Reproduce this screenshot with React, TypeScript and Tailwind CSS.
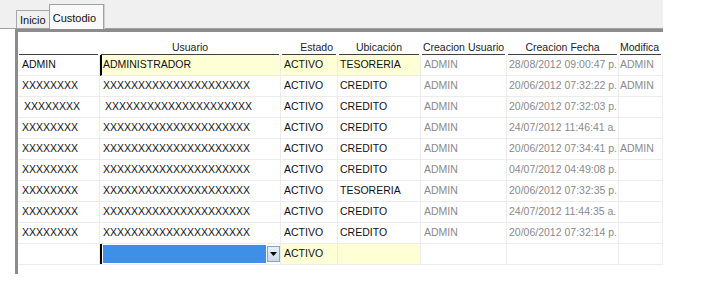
import React from "react";

type Row = {
  login: string;
  user: string;
  estado: string;
  ubic: string;
  cu: string;
  cf: string;
  mod: string;
  indent?: boolean;
};

const X8 = "XXXXXXXX";
const X20 = "XXXXXXXXXXXXXXXXXXXXX";

const rows: Row[] = [
  { login: "ADMIN", user: "ADMINISTRADOR", estado: "ACTIVO", ubic: "TESORERIA", cu: "ADMIN", cf: "28/08/2012 09:00:47 p.", mod: "ADMIN" },
  { login: X8, user: X20, estado: "ACTIVO", ubic: "CREDITO", cu: "ADMIN", cf: "20/06/2012 07:32:22 p.", mod: "ADMIN" },
  { login: X8, user: X20, estado: "ACTIVO", ubic: "CREDITO", cu: "ADMIN", cf: "20/06/2012 07:32:03 p.", mod: "", indent: true },
  { login: X8, user: X20, estado: "ACTIVO", ubic: "CREDITO", cu: "ADMIN", cf: "24/07/2012 11:46:41 a.", mod: "" },
  { login: X8, user: X20, estado: "ACTIVO", ubic: "CREDITO", cu: "ADMIN", cf: "20/06/2012 07:34:41 p.", mod: "ADMIN" },
  { login: X8, user: X20, estado: "ACTIVO", ubic: "CREDITO", cu: "ADMIN", cf: "04/07/2012 04:49:08 p.", mod: "" },
  { login: X8, user: X20, estado: "ACTIVO", ubic: "TESORERIA", cu: "ADMIN", cf: "20/06/2012 07:32:35 p.", mod: "" },
  { login: X8, user: X20, estado: "ACTIVO", ubic: "CREDITO", cu: "ADMIN", cf: "24/07/2012 11:44:35 a.", mod: "" },
  { login: X8, user: X20, estado: "ACTIVO", ubic: "CREDITO", cu: "ADMIN", cf: "20/06/2012 07:32:14 p.", mod: "" },
];

const gridCols = "grid grid-cols-[82px_181px_57px_83px_86px_112px_44px]";

function Cell({ children, className = "" }: { children?: React.ReactNode; className?: string }) {
  return (
    <div className={`h-[21px] border-b border-r border-[#ececec] flex items-center overflow-hidden whitespace-nowrap ${className}`}>
      {children}
    </div>
  );
}

export default function App() {
  return (
    <div
      className="w-[710px] h-[286px] bg-white overflow-hidden text-[10.5px] text-[#111]"
      style={{ fontFamily: "'Liberation Sans', Arial, sans-serif" }}
    >
      {/* tab strip */}
      <div className="w-[663px] h-[29px] bg-[#f0f0f0] flex items-end pl-[16px] border-b border-[#a0a0a0]">
        <div className="h-[18px] px-[3px] border-l border-t border-[#a8a8a8] flex items-center pt-[1px] text-[#111] text-[11px]">Inicio</div>
        <div className="h-[25px] w-[55px] px-[3px] bg-[#f9f9f9] border-l border-t border-r border-[#a0a0a0] shadow-[1px_0_0_#d0d0d0] flex items-start pt-[5px] text-[#111] text-[11px] -mb-px">
          Custodio
        </div>
      </div>

      {/* grid frame */}
      <div className="ml-[15px] w-[648px] h-[245px] border-t-[3px] border-l-[3px] border-[#8c8c8c] bg-white">
        {/* header */}
        <div className={`${gridCols} h-[23px] text-[#222]`}>
          {["", "Usuario", "Estado", "Ubicación", "Creacion Usuario", "Creacion Fecha", "Modifica"].map((h, i) => (
            <div key={i} className="h-[23px] pl-[1px] pr-[2px] flex">
              <div
                className={`flex-1 border-b border-[#404040] flex items-end pb-0 leading-[13px] whitespace-nowrap overflow-hidden ${
                  i === 2 ? "justify-end pr-[3px]" : i === 6 ? "justify-start" : "justify-center"
                }`}
              >
                {h}
              </div>
            </div>
          ))}
        </div>

        {/* rows */}
        {rows.map((r, idx) => {
          const first = idx === 0;
          return (
            <div key={idx} className={gridCols}>
              <Cell className={r.indent ? "pl-[6px]" : "pl-[4px]"}>{r.login}</Cell>
              <Cell className={first ? "bg-[#ffffd5] border-l-2 border-l-black pl-[1px]" : r.indent ? "pl-[5px]" : "pl-[3px]"}>
                {r.user}
              </Cell>
              <Cell className={first ? "bg-[#ffffd5] pl-[3px]" : "pl-[3px]"}>{r.estado}</Cell>
              <Cell className={first ? "bg-[#ffffd5] pl-[2px]" : "pl-[2px]"}>{r.ubic}</Cell>
              <Cell className="text-[#8a8a8a] pl-[3px]">{r.cu}</Cell>
              <Cell className="text-[#8a8a8a] pl-[2px]">{r.cf}</Cell>
              <Cell className="text-[#8a8a8a] pl-[1px]">{r.mod}</Cell>
            </div>
          );
        })}

        {/* new row */}
        <div className={gridCols}>
          <Cell />
          <div className="h-[21px] border-b border-r border-[#ececec] flex items-center">
            <div className="w-[2px] h-[20px] bg-black" />
            <div className="w-[165px] h-[18px] ml-[1px] bg-[#3d8fe8]" />
            <div className="w-[13px] h-[16px] ml-[1px] border border-[#8aa4c0] bg-gradient-to-b from-[#e8f0f8] to-[#c8d8e8] flex items-center justify-center">
              <svg width="7" height="4" viewBox="0 0 7 4">
                <path d="M0 0h7L3.5 4z" fill="#000" />
              </svg>
            </div>
          </div>
          <Cell className="bg-[#ffffd5] pl-[3px]">ACTIVO</Cell>
          <Cell className="bg-[#ffffd5]" />
          <Cell />
          <Cell />
          <Cell />
        </div>
      </div>
    </div>
  );
}
